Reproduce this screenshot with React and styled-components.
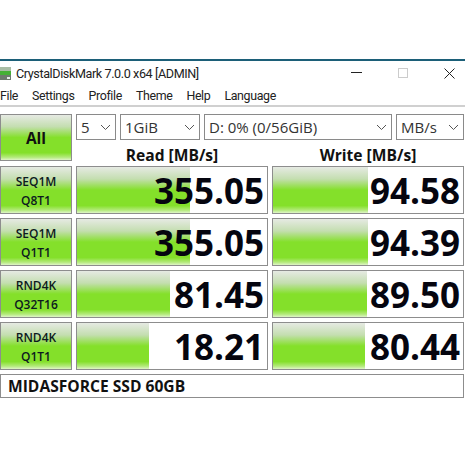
import React from "react";
import styled, { createGlobalStyle } from "styled-components";

const Global = createGlobalStyle`
  html, body {
    margin: 0;
    padding: 0;
    background: #fff;
  }
  * {
    box-sizing: border-box;
  }
`;

const Page = styled.div`
  width: 465px;
  height: 465px;
  padding-top: 59px;
  overflow: hidden;
  background: #fff;
  font-family: "Open Sans", "Noto Sans", sans-serif;
  color: #111;
`;

const Window = styled.div`
  border-top: 2px solid #1c5f78;
`;

const TitleBar = styled.div`
  display: flex;
  align-items: center;
  height: 24px;
  font-family: Roboto, sans-serif;
  font-size: 12.6px;
  letter-spacing: -0.4px;
  color: #222;
`;

const AppIcon = styled.svg`
  width: 13px;
  height: 16px;
  margin-right: 3px;
  flex: none;
`;

const WindowButtons = styled.div`
  display: flex;
  align-items: center;
  margin-left: auto;
  padding-right: 10px;
  gap: 36px;
`;

const MenuBar = styled.div`
  display: flex;
  align-items: center;
  gap: 14px;
  height: 22px;
  font-family: Roboto, sans-serif;
  font-size: 12.4px;
  letter-spacing: -0.35px;
  color: #222;
  border-bottom: 2px solid #d0d0d0;
`;

const Body = styled.div`
  display: grid;
  grid-template-columns: 72px 192px 192px;
  column-gap: 4px;
  padding-top: 7px;
`;

const greenFace = `linear-gradient(180deg, #e6eae3 0%, #c4deb0 26%, #84e02a 50%, #84e02a 84%, #b4ea7c 94%, #dff5c8 100%)`;

const AllButton = styled.div`
  grid-row: span 2;
  height: 47px;
  display: flex;
  align-items: center;
  justify-content: center;
  font-size: 15.5px;
  font-weight: 700;
  background: ${greenFace};
  border: 1px solid #8d8d8d;
`;

const Toolbar = styled.div`
  grid-column: 2 / 4;
  display: flex;
  gap: 4px;
  height: 26px;
`;

const Select = styled.div`
  display: flex;
  align-items: center;
  justify-content: space-between;
  width: ${props => props.width}px;
  padding: 0 4px;
  font-size: 15px;
  color: #333;
  border: 1px solid #8a8a8a;
`;

const Heading = styled.div`
  display: flex;
  align-items: center;
  justify-content: center;
  height: 26px;
  padding-top: 3px;
  font-size: 15.6px;
  font-weight: 700;
`;

const Rows = styled.div`
  grid-column: 1 / 4;
  display: grid;
  grid-template-columns: 72px 192px 192px;
  gap: 4px;
`;

const RowLabel = styled.div`
  height: 48px;
  display: flex;
  flex-direction: column;
  align-items: center;
  justify-content: center;
  gap: 2px;
  padding-top: 1px;
  font-size: 12px;
  line-height: 17px;
  font-weight: 600;
  color: #0c1a20;
  background: ${greenFace};
  border: 1px solid #8d8d8d;
`;

const Meter = styled.div`
  position: relative;
  height: 48px;
  display: flex;
  align-items: center;
  justify-content: flex-end;
  padding-right: 3px;
  font-size: 35px;
  font-weight: 700;
  color: #05050f;
  background: #fff;
  border: 1px solid #8d8d8d;
`;

const MeterFill = styled.div`
  position: absolute;
  left: 0;
  top: 0;
  bottom: 0;
  background: ${greenFace};
`;

const MeterValue = styled.span`
  position: relative;
`;

const Footer = styled.div`
  grid-column: 1 / 4;
  height: 24px;
  display: flex;
  align-items: center;
  padding-left: 7px;
  font-size: 15.6px;
  font-weight: 700;
  border: 1px solid #8d8d8d;
  width: 464px;
`;

const Chevron = () => (
  <svg width="11" height="7" viewBox="0 0 11 7">
    <path d="M1 1l4.5 4.5L10 1" fill="none" stroke="#555" strokeWidth="1" />
  </svg>
);

const results = [
  { label: ["SEQ1M", "Q8T1"], read: "355.05", readBar: 113, write: "94.58", writeBar: 95 },
  { label: ["SEQ1M", "Q1T1"], read: "355.05", readBar: 113, write: "94.39", writeBar: 95 },
  { label: ["RND4K", "Q32T16"], read: "81.45", readBar: 93, write: "89.50", writeBar: 94 },
  { label: ["RND4K", "Q1T1"], read: "18.21", readBar: 72, write: "80.44", writeBar: 92 },
];

const App = () => (
  <Page>
    <Global />
    <Window>
      <TitleBar>
        <AppIcon viewBox="0 0 13 16">
          <rect x="0" y="2" width="11" height="4" fill="#a9bda5" />
          <rect x="0" y="6" width="11" height="4" fill="#45b035" />
          <rect x="0" y="10" width="11" height="5" fill="#6d7a6d" />
          <rect x="7" y="12" width="3" height="2" fill="#e8efe8" />
        </AppIcon>
        CrystalDiskMark 7.0.0 x64 [ADMIN]
        <WindowButtons>
          <svg width="11" height="2" viewBox="0 0 11 2">
            <rect width="11" height="1" fill="#222" />
          </svg>
          <svg width="10" height="10" viewBox="0 0 10 10">
            <rect x="0.5" y="0.5" width="9" height="9" fill="none" stroke="#ccc" />
          </svg>
          <svg width="11" height="11" viewBox="0 0 11 11">
            <path d="M0.5 0.5l10 10M10.5 0.5l-10 10" stroke="#222" strokeWidth="1" />
          </svg>
        </WindowButtons>
      </TitleBar>
      <MenuBar>
        <span>File</span>
        <span>Settings</span>
        <span>Profile</span>
        <span>Theme</span>
        <span>Help</span>
        <span>Language</span>
      </MenuBar>
      <Body>
        <AllButton>All</AllButton>
        <Toolbar>
          <Select width={40}>5<Chevron /></Select>
          <Select width={80}>1GiB<Chevron /></Select>
          <Select width={188}>D: 0% (0/56GiB)<Chevron /></Select>
          <Select width={68}>MB/s<Chevron /></Select>
        </Toolbar>
        <Heading>Read [MB/s]</Heading>
        <Heading>Write [MB/s]</Heading>
        <Rows>
          {results.map(row => (
            <React.Fragment key={row.label.join() + row.read}>
              <RowLabel>
                <span>{row.label[0]}</span>
                <span>{row.label[1]}</span>
              </RowLabel>
              <Meter>
                <MeterFill style={{ width: row.readBar }} />
                <MeterValue>{row.read}</MeterValue>
              </Meter>
              <Meter>
                <MeterFill style={{ width: row.writeBar }} />
                <MeterValue>{row.write}</MeterValue>
              </Meter>
            </React.Fragment>
          ))}
          <Footer>MIDASFORCE SSD 60GB</Footer>
        </Rows>
      </Body>
    </Window>
  </Page>
);

export default App;
